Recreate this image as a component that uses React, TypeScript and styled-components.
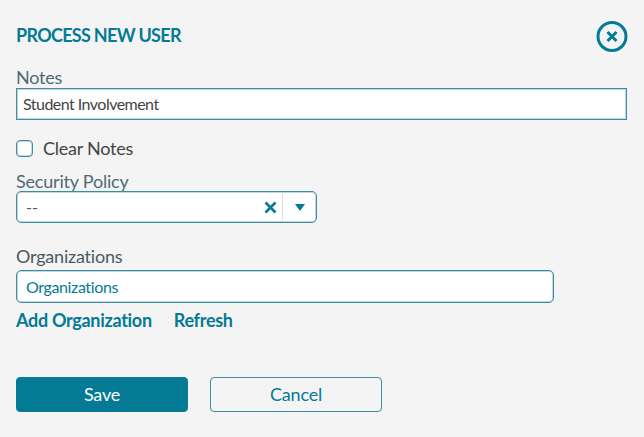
import React from "react";
import styled, { createGlobalStyle } from "styled-components";

const teal = "#057a94";
const borderTeal = "#3f8ba0";
const borderGlow = "rgba(74, 147, 166, 0.35)";

const Global = createGlobalStyle`
  html, body { margin: 0; padding: 0; background: #f4f4f4; }
  body { font-family: Lato, "Liberation Sans", sans-serif; overflow: hidden; }
`;

const Dialog = styled.div`
  width: 644px;
  height: 437px;
  box-sizing: border-box;
  padding: 20px 17px 0 16px;
  background: #f4f4f4;
`;

const Header = styled.div`
  display: flex;
  justify-content: space-between;
  align-items: flex-start;
  height: 46px;
`;

const Title = styled.h1`
  margin: 0;
  font-size: 18px;
  line-height: 30px;
  font-weight: 700;
  letter-spacing: -0.7px;
  color: ${teal};
`;

const CloseButton = styled.button`
  width: 32px;
  height: 32px;
  padding: 0;
  border: none;
  background: none;
  margin-right: -1px;
  display: block;
`;

const Label = styled.div<{ $dark?: boolean }>`
  font-size: 18px;
  line-height: 22px;
  height: 22px;
  letter-spacing: -0.2px;
  color: ${(p) => (p.$dark ? "#4a5a60" : "#4f6b75")};
`;

const TextBox = styled.div<{ $width: number; $rounded?: boolean; $accent?: boolean }>`
  box-sizing: border-box;
  width: ${(p) => p.$width}px;
  height: ${(p) => (p.$rounded ? 33 : 32)}px;
  background: #fff;
  border: 1px solid ${borderTeal};
  box-shadow: inset 0 0 0 1px ${borderGlow};
  border-radius: ${(p) => (p.$rounded ? 5 : 0)}px;
  display: flex;
  align-items: center;
  padding: 0 0 1px ${(p) => (p.$rounded ? 9 : 6)}px;
  font-size: 16px;
  letter-spacing: ${(p) => (p.$accent ? -0.38 : -0.53)}px;
  color: ${(p) => (p.$accent ? teal : "#444")};
`;

const CheckRow = styled.label`
  display: flex;
  align-items: center;
  gap: 10px;
  margin-top: 17px;
  height: 22px;
  font-size: 18px;
  letter-spacing: -0.25px;
  color: #444;
`;

const Box = styled.span`
  box-sizing: border-box;
  width: 17px;
  height: 17px;
  background: #fff;
  border: 1px solid ${borderTeal};
  box-shadow: inset 0 0 0 1px ${borderGlow};
  border-radius: 4px;
`;

const PolicyField = styled.div`
  margin-top: 10px;
`;

const PolicyLabel = styled(Label)`
  line-height: 24px;
`;

const SelectBox = styled.div`
  box-sizing: border-box;
  width: 301px;
  height: 32px;
  background: #fff;
  border: 1px solid ${borderTeal};
  box-shadow: inset 0 0 0 1px ${borderGlow};
  border-radius: 5px;
  display: flex;
  align-items: center;
  font-size: 16px;
  color: #555;
`;

const SelectValue = styled.span`
  flex: 1;
  padding: 0 0 2px 9px;
`;

const ClearIcon = styled.svg`
  width: 13px;
  height: 13px;
  margin-right: 5px;
`;

const ArrowCell = styled.div`
  width: 33px;
  height: 100%;
  border-left: 1px solid #ddd;
  display: flex;
  align-items: center;
  justify-content: center;
`;

const OrgField = styled.div`
  margin-top: 22px;
`;

const OrgLabel = styled(Label)`
  height: 25px;
`;

const Links = styled.div`
  display: flex;
  gap: 22px;
  margin-top: 6px;
  font-size: 18px;
  line-height: 22px;
  font-weight: 700;
  letter-spacing: -0.3px;
  color: ${teal};
`;

const Actions = styled.div`
  display: flex;
  gap: 22px;
  margin-top: 46px;
`;

const ActionButton = styled.button<{ $primary?: boolean }>`
  box-sizing: border-box;
  width: 172px;
  height: 35px;
  border-radius: 4px;
  border: 1px solid ${(p) => (p.$primary ? teal : borderTeal)};
  background: ${(p) => (p.$primary ? teal : "transparent")};
  color: ${(p) => (p.$primary ? "#fff" : teal)};
  padding: 0 0 2px;
  font: 400 18px Lato, "Liberation Sans", sans-serif;
  letter-spacing: -0.2px;
`;

export default function App() {
  return (
    <Dialog>
      <Global />
      <Header>
        <Title>PROCESS NEW USER</Title>
        <CloseButton aria-label="Close">
          <svg width="32" height="32" viewBox="0 0 32 32" fill="none">
            <circle cx="16" cy="16.5" r="14" stroke={teal} strokeWidth="3" />
            <path d="M11.5 12l9 9M20.5 12l-9 9" stroke={teal} strokeWidth="3" />
          </svg>
        </CloseButton>
      </Header>
      <Label>Notes</Label>
      <TextBox $width={611}>Student Involvement</TextBox>
      <CheckRow>
        <Box />
        Clear Notes
      </CheckRow>
      <PolicyField>
        <PolicyLabel>Security Policy</PolicyLabel>
        <SelectBox>
          <SelectValue>--</SelectValue>
          <ClearIcon viewBox="0 0 13 13">
            <path d="M1.5 1.5l10 10M11.5 1.5l-10 10" stroke={teal} strokeWidth="2.6" fill="none" />
          </ClearIcon>
          <ArrowCell>
            <svg width="10" height="7" viewBox="0 0 10 7">
              <path d="M0 0h10L5 7z" fill={teal} />
            </svg>
          </ArrowCell>
        </SelectBox>
      </PolicyField>
      <OrgField>
        <OrgLabel $dark>Organizations</OrgLabel>
        <TextBox $width={538} $rounded $accent>Organizations</TextBox>
      </OrgField>
      <Links>
        <span>Add Organization</span>
        <span>Refresh</span>
      </Links>
      <Actions>
        <ActionButton $primary>Save</ActionButton>
        <ActionButton>Cancel</ActionButton>
      </Actions>
    </Dialog>
  );
}
